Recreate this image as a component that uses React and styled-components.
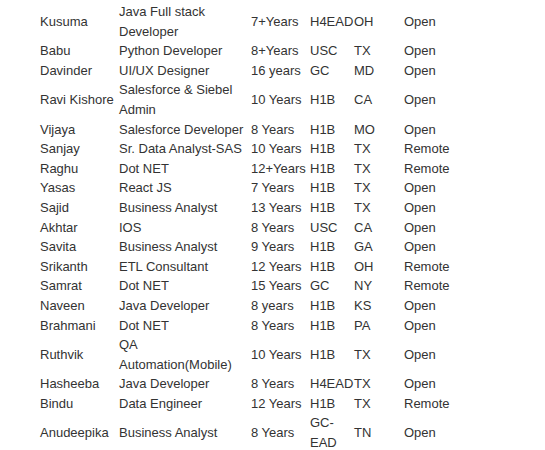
import React from "react";
import styled, { createGlobalStyle } from "styled-components";

const GlobalStyle = createGlobalStyle`
  body {
    margin: 0;
    background: #ffffff;
    font-family: "Liberation Sans", Arial, sans-serif;
  }
`;

const Wrapper = styled.div`
  padding: 2px 0 0 40px;
`;

const Table = styled.table`
  table-layout: fixed;
  border-collapse: collapse;
  border-spacing: 0;
  width: 465px;
  font-size: 13px;
  line-height: 19.6px;
  color: #333333;
`;

const Col = styled.col`
  width: ${(p) => p.$w}px;
`;

const Cell = styled.td`
  padding: 0;
  vertical-align: middle;
  text-align: left;
  word-wrap: break-word;
`;

const rows = [
  ["Kusuma", "Java Full stack Developer", "7+Years", "H4EAD", "OH", "Open"],
  ["Babu", "Python Developer", "8+Years", "USC", "TX", "Open"],
  ["Davinder", "UI/UX Designer", "16 years", "GC", "MD", "Open"],
  ["Ravi Kishore", "Salesforce & Siebel Admin", "10 Years", "H1B", "CA", "Open"],
  ["Vijaya", "Salesforce Developer", "8 Years", "H1B", "MO", "Open"],
  ["Sanjay", "Sr. Data Analyst-SAS", "10 Years", "H1B", "TX", "Remote"],
  ["Raghu", "Dot NET", "12+Years", "H1B", "TX", "Remote"],
  ["Yasas", "React JS", "7 Years", "H1B", "TX", "Open"],
  ["Sajid", "Business Analyst", "13 Years", "H1B", "TX", "Open"],
  ["Akhtar", "IOS", "8 Years", "USC", "CA", "Open"],
  ["Savita", "Business Analyst", "9 Years", "H1B", "GA", "Open"],
  ["Srikanth", "ETL Consultant", "12 Years", "H1B", "OH", "Remote"],
  ["Samrat", "Dot NET", "15 Years", "GC", "NY", "Remote"],
  ["Naveen", "Java Developer", "8 years", "H1B", "KS", "Open"],
  ["Brahmani", "Dot NET", "8 Years", "H1B", "PA", "Open"],
  ["Ruthvik", "QA Automation(Mobile)", "10 Years", "H1B", "TX", "Open"],
  ["Hasheeba", "Java Developer", "8 Years", "H4EAD", "TX", "Open"],
  ["Bindu", "Data Engineer", "12 Years", "H1B", "TX", "Remote"],
  ["Anudeepika", "Business Analyst", "8 Years", "GC-EAD", "TN", "Open"],
];

const widths = [79, 132, 59, 44, 50, 101];

const App = () => {
  return (
    <Wrapper>
      <GlobalStyle />
      <Table>
        <colgroup>
          {widths.map((w, i) => (
            <Col key={i} $w={w} />
          ))}
        </colgroup>
        <tbody>
          {rows.map((row) => (
            <tr key={row[0]}>
              {row.map((c, i) => (
                <Cell key={i}>{c}</Cell>
              ))}
            </tr>
          ))}
        </tbody>
      </Table>
    </Wrapper>
  );
};

export default App;
